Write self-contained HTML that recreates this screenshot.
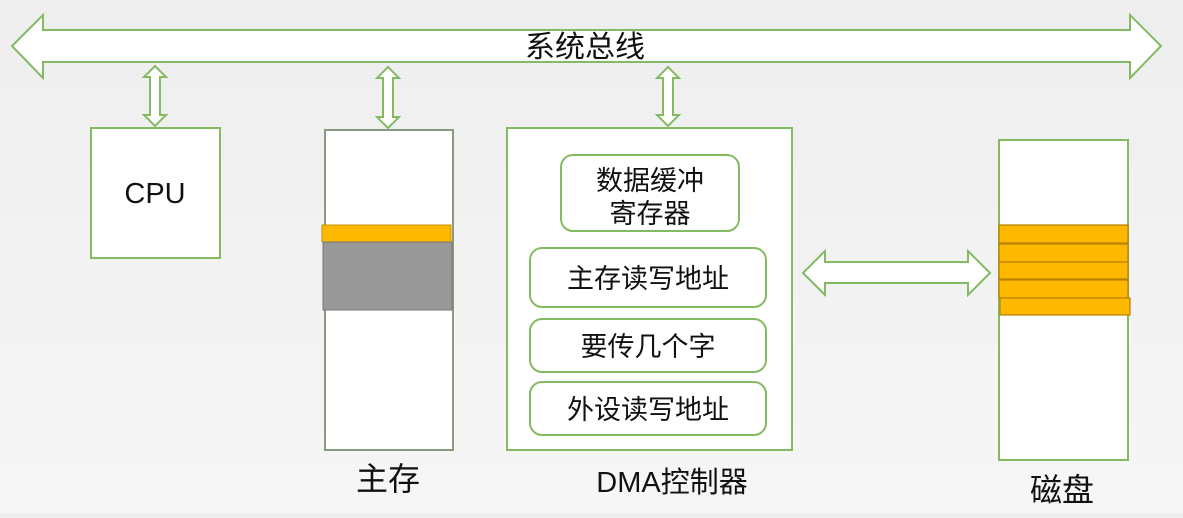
<!DOCTYPE html>
<html><head><meta charset="utf-8"><style>
html,body{margin:0;padding:0;}
body{width:1183px;height:513px;overflow:hidden;background:linear-gradient(#eeeeee,#f6f6f6);}
text{font-family:"Liberation Sans","Noto Sans CJK SC",sans-serif;fill:#111;}
</style></head><body>
<svg width="1183" height="513" viewBox="0 0 1183 513" xmlns="http://www.w3.org/2000/svg">
<g fill="#fff" stroke="#84bb62" stroke-width="2">
<path d="M12,46 L43,15 L43,30 L1130,30 L1130,15 L1161,46 L1130,78 L1130,62 L43,62 L43,78 Z"/>
<path d="M155,66 L166,77 L160,77 L160,115 L166,115 L155,126 L144,115 L150,115 L150,77 L144,77 Z"/>
<path d="M388,67 L399,78 L393,78 L393,117 L399,117 L388,128 L377,117 L383,117 L383,78 L377,78 Z"/>
<path d="M668,67 L679,78 L673,78 L673,115 L679,115 L668,126 L657,115 L663,115 L663,78 L657,78 Z"/>
<rect x="91" y="128" width="129" height="130"/>
<rect x="325" y="130" width="128" height="320" stroke="#8a9a80"/>
<rect x="507" y="128" width="285" height="322"/>
<rect x="561" y="155" width="178" height="76" rx="12"/>
<rect x="530" y="248" width="236" height="59" rx="12"/>
<rect x="530" y="319" width="236" height="53" rx="12"/>
<rect x="530" y="382" width="236" height="53" rx="12"/>
<rect x="999" y="140" width="129" height="320"/>
<path d="M803,273 L825,251 L825,262 L968,262 L968,251 L990,273 L968,295 L968,283 L825,283 L825,295 Z"/>
</g>
<rect x="322" y="225" width="129" height="17" fill="#ffb800" stroke="#c89000" stroke-width="1"/>
<rect x="323" y="242" width="129" height="68" fill="#999" stroke="#777" stroke-width="1"/>
<g fill="#ffb800" stroke="#b88000" stroke-width="1.2">
<rect x="999" y="225" width="129" height="18"/>
<rect x="999" y="244" width="129" height="18"/>
<rect x="999" y="262" width="129" height="17"/>
<rect x="999" y="280" width="129" height="18"/>
<rect x="1000" y="298" width="130" height="17"/>
</g>
<text x="585" y="57" font-size="30" text-anchor="middle">系统总线</text>
<text x="155" y="203" font-size="29" text-anchor="middle">CPU</text>
<text x="650" y="190" font-size="27" text-anchor="middle">数据缓冲</text>
<text x="650" y="223" font-size="27" text-anchor="middle">寄存器</text>
<text x="648" y="288" font-size="27" text-anchor="middle">主存读写地址</text>
<text x="648" y="356" font-size="27" text-anchor="middle">要传几个字</text>
<text x="648" y="419" font-size="27" text-anchor="middle">外设读写地址</text>
<text x="388" y="490" font-size="32" text-anchor="middle">主存</text>
<text x="672" y="492" font-size="29" text-anchor="middle">DMA控制器</text>
<text x="1062" y="501" font-size="32" text-anchor="middle">磁盘</text>
</svg>
</body></html>
